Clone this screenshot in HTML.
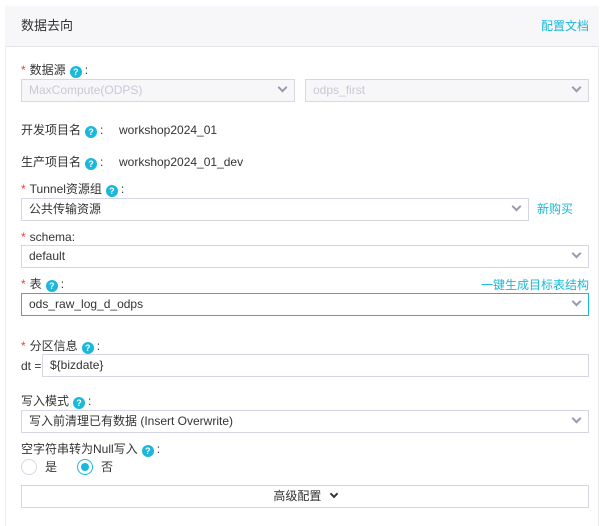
<!DOCTYPE html>
<html><head><meta charset="utf-8"><style>
*{box-sizing:border-box;margin:0;padding:0}
body{width:612px;height:520px;background:#fff;font-family:"Liberation Sans","Noto Sans CJK SC",sans-serif;font-size:12px;color:#333;position:relative;overflow:hidden}
.card{position:absolute;left:5px;top:6px;width:594px;height:520px;border:1px solid #ececf2;border-bottom:none;background:#fff}
.hd{position:absolute;left:5px;top:6px;width:594px;height:41px;background:#f7f7fa;border-bottom:1px solid #e3e3ea}
.a{position:absolute;white-space:nowrap;line-height:16px}
.st{color:#f04134;margin-right:4px}
.q{display:inline-block;width:12px;height:12px;border-radius:50%;background:#1ab8d9;color:#fff;font-size:9px;font-weight:bold;text-align:center;line-height:12px;vertical-align:-1px;margin:0 3px 0 4px}
.sel{position:absolute;height:23px;border:1px solid #d6d6e6;background:#fff;padding-left:7px;line-height:21px;font-size:12px}
.sel.dis{background:#f7f7fa;color:#c8c8d8;border-color:#d6d6e6}
.sel .ar{position:absolute;right:8px;top:7px;width:7px;height:7px;border-right:2px solid #9a9ab0;border-bottom:2px solid #9a9ab0;transform:rotate(45deg);top:4px}
.link{color:#1ab8d9}
.rad{position:absolute;width:16px;height:16px;border-radius:50%;border:1px solid #d6d6e6;background:#fff}
.rad.on{border-color:#1ab8d9}
.rad.on::after{content:"";position:absolute;left:3px;top:3px;width:8px;height:8px;border-radius:50%;background:#1ab8d9}
</style></head><body>
<div class="card"></div>
<div class="hd"></div>
<div class="a" style="left:21px;top:18px;font-size:13px">数据去向</div>
<div class="a link" style="right:23px;top:18px">配置文档</div>

<div class="a" style="left:21px;top:62px"><span class="st">*</span>数据源<span class="q">?</span>:</div>
<div class="sel dis" style="left:21px;top:79px;width:274px">MaxCompute(ODPS)<span class="ar"></span></div>
<div class="sel dis" style="left:305px;top:79px;width:284px">odps_first<span class="ar"></span></div>

<div class="a" style="left:21px;top:122px">开发项目名<span class="q">?</span>:</div>
<div class="a" style="left:119px;top:122px">workshop2024_01</div>
<div class="a" style="left:21px;top:154px">生产项目名<span class="q">?</span>:</div>
<div class="a" style="left:119px;top:154px">workshop2024_01_dev</div>

<div class="a" style="left:21px;top:181px"><span class="st">*</span>Tunnel资源组<span class="q">?</span>:</div>
<div class="sel" style="left:21px;top:198px;width:508px">公共传输资源<span class="ar"></span></div>
<div class="a link" style="left:537px;top:201px">新购买</div>

<div class="a" style="left:21px;top:229px"><span class="st">*</span>schema:</div>
<div class="sel" style="left:21px;top:245px;width:568px">default<span class="ar"></span></div>

<div class="a" style="left:21px;top:276px"><span class="st">*</span>表<span class="q">?</span>:</div>
<div class="a link" style="right:23px;top:277px">一键生成目标表结构</div>
<div class="sel" style="left:21px;top:293px;width:568px;border-color:#1ab8d9">ods_raw_log_d_odps<span class="ar"></span></div>

<div class="a" style="left:21px;top:338px"><span class="st">*</span>分区信息<span class="q">?</span>:</div>
<div class="a" style="left:21px;top:358px">dt =</div>
<div class="sel" style="left:42px;top:354px;width:547px">${bizdate}</div>

<div class="a" style="left:21px;top:393px">写入模式<span class="q">?</span>:</div>
<div class="sel" style="left:21px;top:410px;width:568px">写入前清理已有数据 (Insert Overwrite)<span class="ar"></span></div>

<div class="a" style="left:21px;top:441px">空字符串转为Null写入<span class="q">?</span>:</div>
<div class="rad" style="left:21px;top:459px"></div>
<div class="a" style="left:45px;top:459px">是</div>
<div class="rad on" style="left:77px;top:459px"></div>
<div class="a" style="left:101px;top:459px">否</div>

<div class="sel" style="left:21px;top:485px;width:568px;text-align:center;padding:0">高级配置 <span style="display:inline-block;width:6px;height:6px;border-right:2px solid #333;border-bottom:2px solid #333;transform:rotate(45deg);vertical-align:3px;margin-left:6px"></span></div>
</body></html>
